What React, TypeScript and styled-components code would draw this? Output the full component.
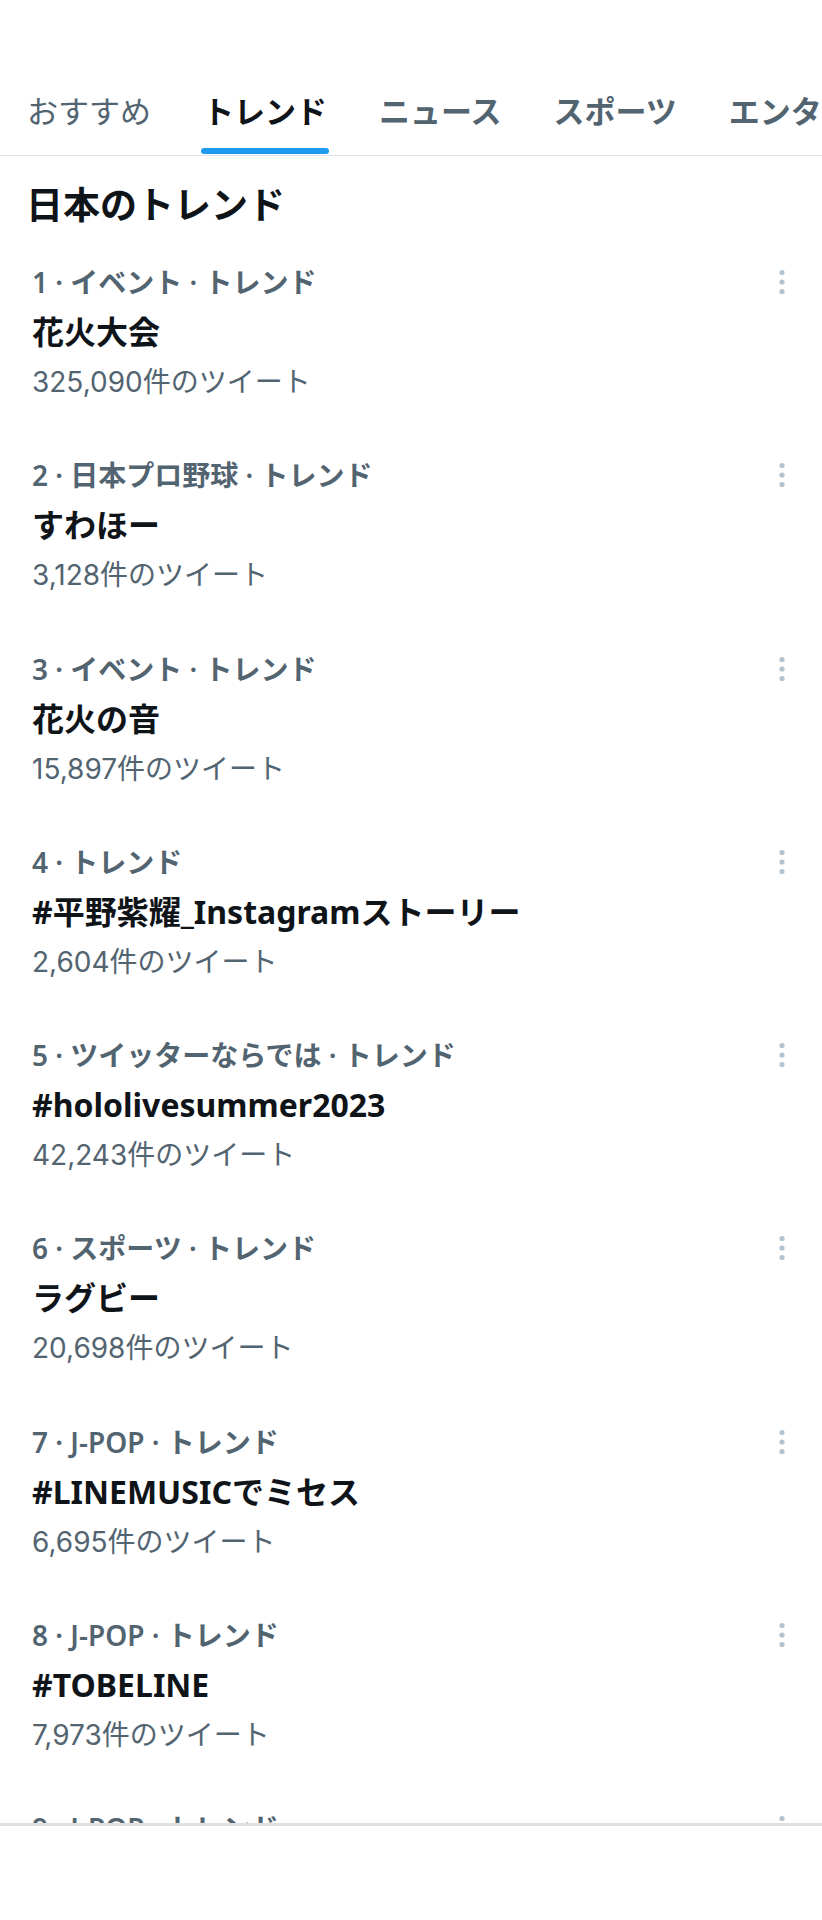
import React from "react";
import styled, { createGlobalStyle } from "styled-components";

const GlobalStyle = createGlobalStyle`
  html, body {
    margin: 0;
    padding: 0;
    background: #ffffff;
  }
  body {
    font-family: "Noto Sans", "Noto Sans CJK JP", sans-serif;
    -webkit-font-smoothing: antialiased;
  }
`;

const Screen = styled.div`
  width: 822px;
  height: 1920px;
  display: flex;
  flex-direction: column;
  background: #ffffff;
  overflow: hidden;
`;

const Main = styled.main`
  flex: 1;
  min-height: 0;
  overflow: hidden;
  padding-top: 70px;
`;

const TabBar = styled.nav`
  display: flex;
  gap: 48px;
  padding-left: 25px;
  border-bottom: 1px solid #dde3e7;
  white-space: nowrap;
  overflow: hidden;
`;

const Tab = styled.div<{ $active?: boolean; $light?: boolean }>`
  display: flex;
  flex-direction: column;
  flex-shrink: 0;
  padding-top: 20px;
  font-family: "Noto Sans CJK JP", sans-serif;
  font-size: 31px;
  line-height: 40px;
  font-weight: ${(p) => (p.$light ? 400 : 700)};
  color: ${(p) => (p.$active ? "#0f1419" : "#536471")};
`;

const TabLabel = styled.span`
  padding: 0 2px;
`;

const Indicator = styled.span<{ $active?: boolean }>`
  height: 6px;
  margin-top: 18px;
  margin-bottom: 1px;
  border-radius: 3px;
  background: ${(p) => (p.$active ? "#1d9bf0" : "transparent")};
`;

const Heading = styled.h2`
  margin: 22px 0 6px;
  padding-left: 26px;
  font-family: "Noto Sans CJK JP", sans-serif;
  font-size: 37px;
  line-height: 50px;
  font-weight: 700;
  color: #0f1419;
`;

const List = styled.ul`
  list-style: none;
  margin: 0;
  padding: 0;
`;

const Row = styled.li`
  display: flex;
  align-items: flex-start;
  padding: 23px 30px 20.3px 32px;
`;

const RowBody = styled.div`
  flex: 1;
  min-width: 0;
  display: flex;
  flex-direction: column;
`;

const Meta = styled.div`
  font-family: "Noto Sans", "Noto Sans CJK JP", sans-serif;
  font-size: 28px;
  line-height: 50px;
  font-weight: 600;
  color: #536471;
  white-space: nowrap;
`;

const Title = styled.div`
  font-family: "Noto Sans", "Noto Sans CJK JP", sans-serif;
  font-size: 32px;
  line-height: 50px;
  font-weight: 700;
  color: #0f1419;
  white-space: nowrap;
`;

const Count = styled.div`
  font-family: "Inter", "Noto Sans CJK JP", sans-serif;
  font-size: 28px;
  line-height: 50px;
  font-weight: 400;
  color: #536471;
  white-space: nowrap;
`;

const MenuButton = styled.div`
  flex: none;
  width: 20px;
  height: 50px;
  display: flex;
  align-items: center;
  justify-content: center;
`;

const BottomBar = styled.footer`
  flex: none;
  height: 97px;
  box-sizing: border-box;
  border-top: 3px solid #e0e0e0;
  background: #ffffff;
`;

const Dots = () => (
  <svg width="20" height="30" viewBox="0 0 20 30" aria-hidden="true">
    <circle cx="10" cy="5.5" r="2.6" fill="#b3c3cf" />
    <circle cx="10" cy="15" r="2.6" fill="#b3c3cf" />
    <circle cx="10" cy="24.5" r="2.6" fill="#b3c3cf" />
  </svg>
);

type Trend = { meta: string; title?: string; count?: string };

const trends: Trend[] = [
  { meta: "1 · イベント · トレンド", title: "花火大会", count: "325,090件のツイート" },
  { meta: "2 · 日本プロ野球 · トレンド", title: "すわほー", count: "3,128件のツイート" },
  { meta: "3 · イベント · トレンド", title: "花火の音", count: "15,897件のツイート" },
  { meta: "4 · トレンド", title: "#平野紫耀_Instagramストーリー", count: "2,604件のツイート" },
  { meta: "5 · ツイッターならでは · トレンド", title: "#hololivesummer2023", count: "42,243件のツイート" },
  { meta: "6 · スポーツ · トレンド", title: "ラグビー", count: "20,698件のツイート" },
  { meta: "7 · J-POP · トレンド", title: "#LINEMUSICでミセス", count: "6,695件のツイート" },
  { meta: "8 · J-POP · トレンド", title: "#TOBELINE", count: "7,973件のツイート" },
  { meta: "9 · J-POP · トレンド" },
];

const tabs = [
  { label: "おすすめ", light: true },
  { label: "トレンド", active: true },
  { label: "ニュース" },
  { label: "スポーツ" },
  { label: "エンターテイメント" },
];

export default function App() {
  return (
    <>
      <GlobalStyle />
      <Screen>
        <Main>
          <TabBar>
            {tabs.map((t) => (
              <Tab key={t.label} $active={t.active} $light={t.light}>
                <TabLabel>{t.label}</TabLabel>
                <Indicator $active={t.active} />
              </Tab>
            ))}
          </TabBar>
          <Heading>日本のトレンド</Heading>
          <List>
            {trends.map((t) => (
              <Row key={t.meta}>
                <RowBody>
                  <Meta>{t.meta}</Meta>
                  {t.title && <Title>{t.title}</Title>}
                  {t.count && <Count>{t.count}</Count>}
                </RowBody>
                <MenuButton>
                  <Dots />
                </MenuButton>
              </Row>
            ))}
          </List>
        </Main>
        <BottomBar />
      </Screen>
    </>
  );
}
